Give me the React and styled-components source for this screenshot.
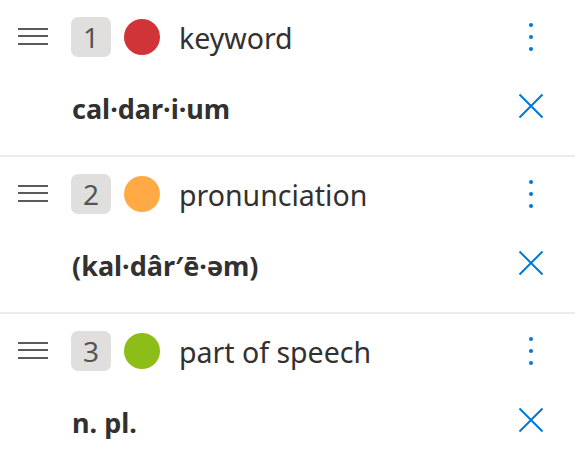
import React from "react";
import styled, { createGlobalStyle } from "styled-components";

const Global = createGlobalStyle`
  html, body { margin: 0; padding: 0; background: #ffffff; }
  body { font-family: "Noto Sans", "Open Sans", sans-serif; color: #323130; }
`;

const List = styled.div`
  display: flex;
  flex-direction: column;
  width: 575px;
`;

const Item = styled.div`
  display: flex;
  flex-direction: column;
  height: 155px;
  border-bottom: 2px solid #ebebeb;
`;

const Header = styled.div`
  display: flex;
  align-items: center;
  height: 40px;
  margin-top: 17px;
  padding-left: 18px;
  padding-right: 28px;
`;

const Grip = styled.div`
  width: 30px;
  height: 17px;
  display: flex;
  flex-direction: column;
  justify-content: space-between;
  margin-top: -2px;
  span {
    display: block;
    height: 2px;
    background: #5a5a5a;
  }
`;

const Badge = styled.div`
  width: 40px;
  height: 40px;
  margin-left: 23px;
  border-radius: 7px;
  background: #e1dfdd;
  color: #555555;
  font-size: 28px;
  font-weight: 400;
  display: flex;
  align-items: center;
  justify-content: center;
  line-height: 1;
`;

const Dot = styled.div`
  width: 36px;
  height: 36px;
  border-radius: 50%;
  margin-left: 13px;
  background: ${(p) => p.$color};
`;

const Label = styled.div`
  margin-left: 19px;
  font-size: 28.5px;
  color: #323130;
  flex: 1;
  white-space: nowrap;
  line-height: 1;
  margin-top: 2px;
`;

const IconButton = styled.button`
  width: 32px;
  height: 36px;
  border: none;
  background: none;
  padding: 0;
  display: flex;
  align-items: center;
  justify-content: center;
  color: #0078d4;
`;

const Body = styled.div`
  display: flex;
  align-items: center;
  height: 36px;
  margin-top: 31px;
  padding-left: 72px;
  padding-right: 28px;
`;

const Value = styled.div`
  flex: 1;
  font-size: 27px;
  font-weight: 700;
  color: #323130;
  line-height: 1;
  white-space: nowrap;
  margin-top: 4px;
`;

const More = () => (
  <svg width="6" height="30" viewBox="0 0 6 30">
    <circle cx="3" cy="3" r="2" fill="currentColor" />
    <circle cx="3" cy="15" r="2" fill="currentColor" />
    <circle cx="3" cy="27" r="2" fill="currentColor" />
  </svg>
);

const Close = () => (
  <svg width="26" height="26" viewBox="0 0 26 26">
    <path d="M1.5 1.5 L24.5 24.5 M24.5 1.5 L1.5 24.5" stroke="currentColor" strokeWidth="2" fill="none" />
  </svg>
);

const items = [
  { n: 1, color: "#d13438", label: "keyword", value: "cal·dar·i·um" },
  { n: 2, color: "#ffaa44", label: "pronunciation", value: "(kal·dâr′ē·əm)" },
  { n: 3, color: "#8cbd18", label: "part of speech", value: "n. pl." },
];

export default function App() {
  return (
    <>
      <Global />
      <List>
        {items.map((it) => (
          <Item key={it.n}>
            <Header>
              <Grip>
                <span />
                <span />
                <span />
              </Grip>
              <Badge>{it.n}</Badge>
              <Dot $color={it.color} />
              <Label>{it.label}</Label>
              <IconButton aria-label="More">
                <More />
              </IconButton>
            </Header>
            <Body>
              <Value>{it.value}</Value>
              <IconButton aria-label="Remove">
                <Close />
              </IconButton>
            </Body>
          </Item>
        ))}
      </List>
    </>
  );
}
